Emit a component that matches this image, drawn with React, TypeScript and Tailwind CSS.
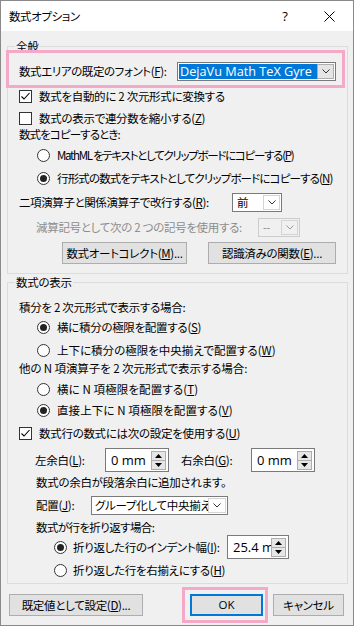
import React from "react";

const JP = "font-['Noto_Sans_CJK_JP',sans-serif] [font-feature-settings:'palt']";
const EN = "font-['Open_Sans','Noto_Sans_CJK_JP',sans-serif]";

function Check({ on }: { on?: boolean }) {
  return (
    <span className="w-[13px] h-[13px] border border-[#333] bg-white flex items-center justify-center shrink-0">
      {on && (
        <svg width="11" height="11" viewBox="0 0 11 11">
          <path d="M1.5 5.5 L4 8 L9.5 2" stroke="#000" strokeWidth="1.1" fill="none" />
        </svg>
      )}
    </span>
  );
}

function Radio({ on }: { on?: boolean }) {
  return (
    <span className="w-[13px] h-[13px] rounded-full border border-[#333] bg-white flex items-center justify-center shrink-0">
      {on && <span className="w-[7px] h-[7px] rounded-full bg-[#222]" />}
    </span>
  );
}

function Chevron({ color = "#333" }: { color?: string }) {
  return (
    <svg width="8" height="5" viewBox="0 0 8 5">
      <path d="M0.5 0.5 L4 4 L7.5 0.5" stroke={color} strokeWidth="1" fill="none" />
    </svg>
  );
}

function Spin({ value, w }: { value: string; w: string }) {
  return (
    <div className={`flex items-center border border-[#7a7a7a] bg-white h-[24px] shrink-0 ${w}`}>
      <span className={`flex-1 min-w-0 overflow-hidden whitespace-nowrap pl-[5px] text-[13px] leading-[18px] tracking-normal ${EN}`}>{value}</span>
      <span className="flex flex-col w-[15px] h-[19px] mr-[2px] border border-[#adadad] bg-[#e6e6e6] shrink-0">
        <span className="flex-1 flex items-center justify-center border-b border-[#adadad]">
          <svg width="7" height="4" viewBox="0 0 7 4"><path d="M0 4 L3.5 0 L7 4Z" fill="#000" /></svg>
        </span>
        <span className="flex-1 flex items-center justify-center">
          <svg width="7" height="4" viewBox="0 0 7 4"><path d="M0 0 L3.5 4 L7 0Z" fill="#000" /></svg>
        </span>
      </span>
    </div>
  );
}

function Btn({ children, w, focus }: { children: React.ReactNode; w: string; focus?: boolean }) {
  return (
    <div
      className={`h-[22px] flex items-center justify-center bg-[#e1e1e1] shrink-0 whitespace-nowrap ${w} ${
        focus ? "border-2 border-[#0078d7]" : "border border-[#adadad]"
      }`}
    >
      {children}
    </div>
  );
}

export default function App() {
  return (
    <div className={`w-[354px] h-[627px] bg-white text-[11.5px] tracking-[-0.3px] leading-[16px] text-black whitespace-nowrap ${JP}`}>
      <div className="w-[354px] h-[626px] border border-[#8a8a8a] bg-[#f0f0f0] flex flex-col">
        {/* title bar */}
        <div className="h-[30px] bg-white flex items-center pl-[8px] shrink-0">
          <span className="flex-1 tracking-[-0.4px]">数式オプション</span>
          <span className={`w-[20px] text-center text-[13px] ${EN} mr-[24px]`}>?</span>
          <span className="w-[20px] flex items-center justify-center mr-[14px]">
            <svg width="11" height="11" viewBox="0 0 11 11">
              <path d="M0.5 0.5 L10.5 10.5 M10.5 0.5 L0.5 10.5" stroke="#000" strokeWidth="1" />
            </svg>
          </span>
        </div>

        <div className="flex flex-col pl-[6px] pr-[5px]">
          {/* Group 1 */}
          <div className="relative mt-[15px] border border-[#dcdcdc] pl-[11px] pt-[12px] pb-[9px] flex flex-col">
            <span className="absolute left-[7px] top-[-9px] px-[1px] bg-[#f0f0f0]">全般</span>
            <div className="absolute left-[-2px] top-[3px] w-[339px] h-[38px] border-[3px] border-[#f5a9c9]" />

            <div className="flex items-center h-[24px]">
              <span className="w-[158px] shrink-0 tracking-[-0.4px]">
                数式エリアの既定のフォント(<u>F</u>):
              </span>
              <div className="w-[159px] h-[19px] border border-[#7a7a7a] bg-white flex items-center">
                <span className={`h-[15px] ml-[1px] w-[138px] pl-[1px] bg-[#0078d7] text-white text-[12.7px] leading-[15px] tracking-normal ${EN}`}>
                  DejaVu Math TeX Gyre
                </span>
                <span className="ml-auto mr-[1px] w-[17px] h-[15px] bg-[#e5e5e5] border border-[#adadad] flex items-center justify-center">
                  <Chevron />
                </span>
              </div>
            </div>

            <div className="flex items-center h-[16px] mt-[5px] gap-[7px]">
              <Check on />
              <span>数式を自動的に 2 次元形式に変換する</span>
            </div>
            <div className="flex items-center h-[16px] mt-[6px] gap-[7px]">
              <Check />
              <span>数式の表示で連分数を縮小する(<u>Z</u>)</span>
            </div>
            <div className="flex items-center h-[16px] mt-[0px]">
              <span className="tracking-[-0.9px]">数式をコピーするとき:</span>
            </div>
            <div className="flex items-center h-[16px] mt-[5px] gap-[7px] pl-[18px]">
              <Radio />
              <span className="tracking-[-1.3px]">MathML をテキストとしてクリップボードにコピーする(<u>P</u>)</span>
            </div>
            <div className="flex items-center h-[16px] mt-[7px] gap-[7px] pl-[18px]">
              <Radio on />
              <span className="tracking-[-0.85px]">行形式の数式をテキストとしてクリップボードにコピーする(<u>N</u>)</span>
            </div>
            <div className="flex items-center h-[20px] mt-[6px]">
              <span className="w-[213px] shrink-0 tracking-[-0.4px]">
                二項演算子と関係演算子で改行する(<u>R</u>):
              </span>
              <div className="w-[50px] h-[19px] border border-[#7a7a7a] bg-white flex items-center">
                <span className="pl-[4px] flex-1">前</span>
                <span className="mr-[1px] w-[17px] h-[15px] border border-[#d4d4d4] bg-white flex items-center justify-center">
                  <Chevron />
                </span>
              </div>
            </div>
            <div className="flex items-center h-[20px] mt-[5px] pl-[17px]">
              <span className="w-[222px] shrink-0 text-[#8d8d8d]">
                減算記号として次の 2 つの記号を使用する:
              </span>
              <div className="w-[42px] h-[19px] border border-[#cccccc] bg-[#f0f0f0] flex items-center">
                <span className={`pl-[4px] flex-1 text-[#8d8d8d] ${EN}`}>--</span>
                <span className="mr-[1px] w-[17px] h-[15px] border border-[#d4d4d4] flex items-center justify-center">
                  <Chevron color="#9a9a9a" />
                </span>
              </div>
            </div>
            <div className="flex items-center h-[22px] mt-[5px] pl-[43px] gap-[21px]">
              <Btn w="w-[125px]">数式オートコレクト(<u>M</u>)...</Btn>
              <Btn w="w-[128px]">認識済みの関数(<u>E</u>)...</Btn>
            </div>
          </div>

          {/* Group 2 */}
          <div className="relative mt-[8px] border border-[#dcdcdc] pl-[11px] pt-[16px] pb-[5px] flex flex-col">
            <span className="absolute left-[7px] top-[-9px] px-[1px] bg-[#f0f0f0]">数式の表示</span>

            <div className="flex items-center h-[16px]">
              <span>積分を 2 次元形式で表示する場合:</span>
            </div>
            <div className="flex items-center h-[16px] mt-[4px] gap-[7px] pl-[18px]">
              <Radio on />
              <span>横に積分の極限を配置する(<u>S</u>)</span>
            </div>
            <div className="flex items-center h-[16px] mt-[7px] gap-[7px] pl-[18px]">
              <Radio />
              <span className="tracking-[0px]">上下に積分の極限を中央揃えで配置する(<u>W</u>)</span>
            </div>
            <div className="flex items-center h-[16px] mt-[2px]">
              <span className="tracking-[-0.1px]">他の N 項演算子を 2 次元形式で表示する場合:</span>
            </div>
            <div className="flex items-center h-[16px] mt-[5px] gap-[7px] pl-[18px]">
              <Radio />
              <span className="tracking-[0.1px]">横に N 項極限を配置する(<u>T</u>)</span>
            </div>
            <div className="flex items-center h-[16px] mt-[5px] gap-[7px] pl-[18px]">
              <Radio on />
              <span className="tracking-[0.1px]">直接上下に N 項極限を配置する(<u>V</u>)</span>
            </div>
            <div className="flex items-center h-[16px] mt-[7px] gap-[7px]">
              <Check on />
              <span>数式行の数式には次の設定を使用する(<u>U</u>)</span>
            </div>
            <div className="flex items-center h-[24px] mt-[7px] pl-[16px]">
              <span className="w-[70px] shrink-0">左余白(<u>L</u>):</span>
              <Spin value="0 mm" w="w-[64px]" />
              <span className="w-[70px] shrink-0 ml-[12px]">右余白(<u>G</u>):</span>
              <Spin value="0 mm" w="w-[64px]" />
            </div>
            <div className="flex items-center h-[16px] mt-[2px] pl-[17px]">
              <span>数式の余白が段落余白に追加されます。</span>
            </div>
            <div className="flex items-center h-[20px] mt-[5px] pl-[17px]">
              <span className="w-[55px] shrink-0">配置(<u>J</u>):</span>
              <div className="w-[137px] h-[19px] border border-[#7a7a7a] bg-white flex items-center">
                <span className="pl-[3px] flex-1 min-w-0 overflow-hidden">グループ化して中央揃え</span>
                <span className="mr-[1px] w-[18px] h-[15px] border border-[#d4d4d4] bg-white flex items-center justify-center shrink-0">
                  <Chevron />
                </span>
              </div>
            </div>
            <div className="flex items-center h-[16px] mt-[4px] pl-[17px]">
              <span className="tracking-[-0.6px]">数式が行を折り返す場合:</span>
            </div>
            <div className="flex items-center h-[20px] mt-[2px] pl-[35px]">
              <Radio on />
              <span className="ml-[6px] w-[154px] shrink-0">折り返した行のインデント幅(<u>I</u>):</span>
              <Spin value="25.4 mm" w="w-[62px]" />
            </div>
            <div className="flex items-center h-[16px] mt-[5px] gap-[6px] pl-[35px]">
              <Radio />
              <span>折り返した行を右揃えにする(<u>H</u>)</span>
            </div>
          </div>

          {/* bottom buttons */}
          <div className="flex items-center h-[22px] mt-[10px] pl-[2px]">
            <Btn w="w-[134px]">既定値として設定(<u>D</u>)...</Btn>
            <div className="relative ml-[47px]">
              <div className="absolute left-[-8px] top-[-7px] w-[86px] h-[36px] border-[3px] border-[#f5a9c9]" />
              <Btn w="w-[73px]" focus>
                <span className={`tracking-normal ${EN}`}>OK</span>
              </Btn>
            </div>
            <div className="ml-[10px]">
              <Btn w="w-[71px]">キャンセル</Btn>
            </div>
          </div>
        </div>
      </div>
    </div>
  );
}
